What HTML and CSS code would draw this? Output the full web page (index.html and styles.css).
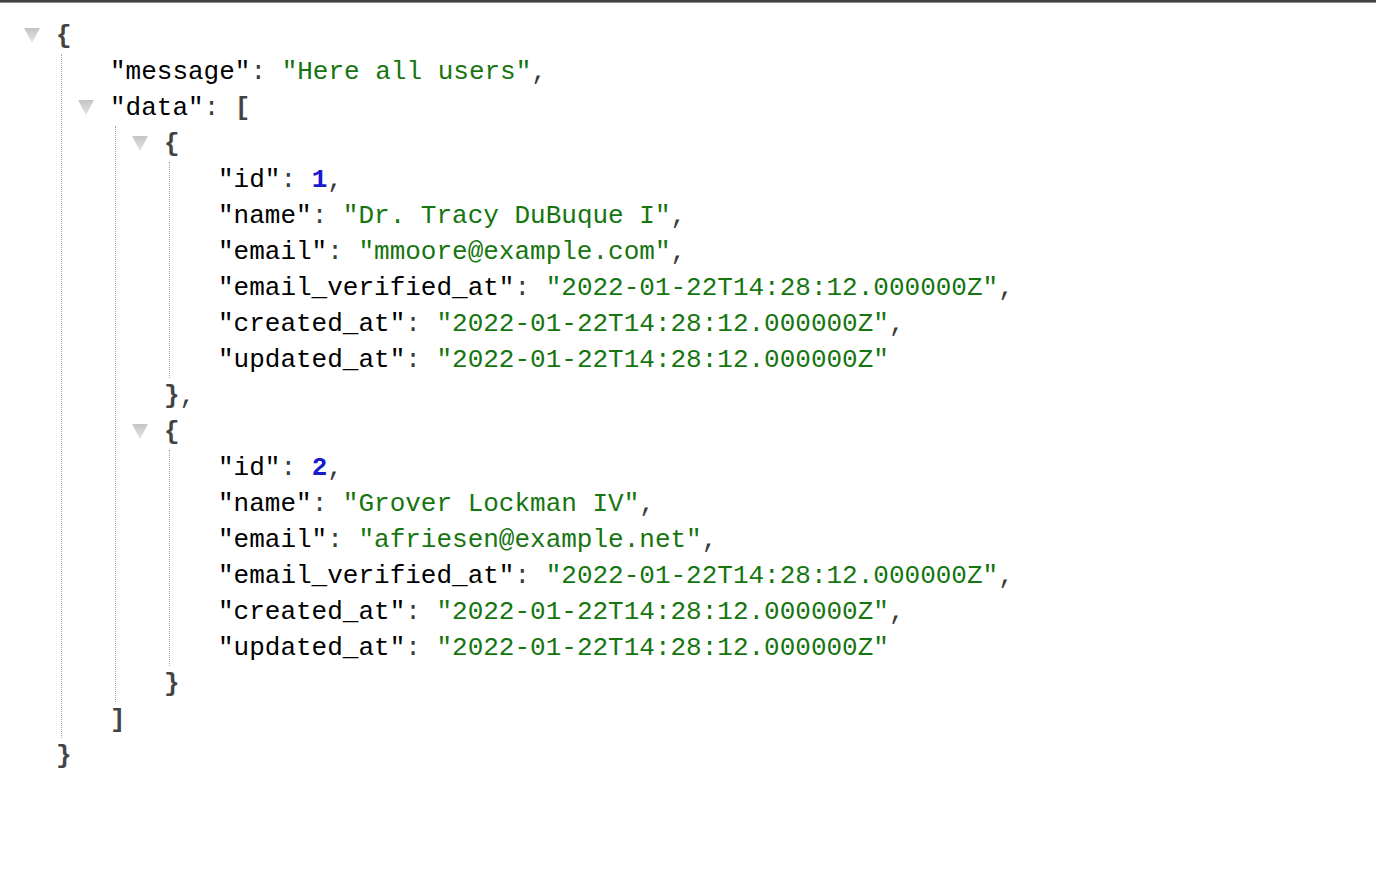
FILE: index.html
```html
<!DOCTYPE html>
<html>
<head>
<meta charset="utf-8">
<link rel="stylesheet" href="styles.css">
</head>
<body>
<div class="topbar"></div>
<div class="json">
  <div class="line"><span class="tog"></span><span class="b">{</span></div>
  <div class="inner">
    <div class="line"><span class="k">"message"</span><span class="p">: </span><span class="s">"Here all users"</span><span class="p">,</span></div>
    <div class="line"><span class="tog"></span><span class="k">"data"</span><span class="p">: </span><span class="b">[</span></div>
    <div class="inner">
      <div class="line"><span class="tog"></span><span class="b">{</span></div>
      <div class="inner">
        <div class="line"><span class="k">"id"</span><span class="p">: </span><span class="n">1</span><span class="p">,</span></div>
        <div class="line"><span class="k">"name"</span><span class="p">: </span><span class="s">"Dr. Tracy DuBuque I"</span><span class="p">,</span></div>
        <div class="line"><span class="k">"email"</span><span class="p">: </span><span class="s">"mmoore@example.com"</span><span class="p">,</span></div>
        <div class="line"><span class="k">"email_verified_at"</span><span class="p">: </span><span class="s">"2022-01-22T14:28:12.000000Z"</span><span class="p">,</span></div>
        <div class="line"><span class="k">"created_at"</span><span class="p">: </span><span class="s">"2022-01-22T14:28:12.000000Z"</span><span class="p">,</span></div>
        <div class="line"><span class="k">"updated_at"</span><span class="p">: </span><span class="s">"2022-01-22T14:28:12.000000Z"</span></div>
      </div>
      <div class="line"><span class="b">}</span><span class="p">,</span></div>
      <div class="line"><span class="tog"></span><span class="b">{</span></div>
      <div class="inner">
        <div class="line"><span class="k">"id"</span><span class="p">: </span><span class="n">2</span><span class="p">,</span></div>
        <div class="line"><span class="k">"name"</span><span class="p">: </span><span class="s">"Grover Lockman IV"</span><span class="p">,</span></div>
        <div class="line"><span class="k">"email"</span><span class="p">: </span><span class="s">"afriesen@example.net"</span><span class="p">,</span></div>
        <div class="line"><span class="k">"email_verified_at"</span><span class="p">: </span><span class="s">"2022-01-22T14:28:12.000000Z"</span><span class="p">,</span></div>
        <div class="line"><span class="k">"created_at"</span><span class="p">: </span><span class="s">"2022-01-22T14:28:12.000000Z"</span><span class="p">,</span></div>
        <div class="line"><span class="k">"updated_at"</span><span class="p">: </span><span class="s">"2022-01-22T14:28:12.000000Z"</span></div>
      </div>
      <div class="line"><span class="b">}</span></div>
    </div>
    <div class="line"><span class="b">]</span></div>
  </div>
  <div class="line"><span class="b">}</span></div>
</div>
</body>
</html>
```

FILE: styles.css
```css
html, body {
  margin: 0;
  padding: 0;
  background: #ffffff;
}

.topbar {
  height: 3px;
  background: #434343;
  border-bottom: 1px solid #8a8a8a;
  box-sizing: border-box;
}

.json {
  font-family: "Liberation Mono", "DejaVu Sans Mono", monospace;
  font-size: 26px;
  line-height: 36px;
  color: #000;
  padding: 15px 0 0 56px;
}

.line {
  position: relative;
  height: 36px;
  white-space: pre;
}

.inner {
  margin-left: 5px;
  border-left: 1px dotted #a6a6a6;
  padding-left: 48px;
}

.tog {
  position: absolute;
  left: -32px;
  top: 10px;
  width: 16px;
  height: 15px;
  background: linear-gradient(#c4c4c4, #e4e4e4);
  clip-path: polygon(0 0, 100% 0, 50% 100%);
}

.k { color: #000; }
.p { color: #3a3a3a; }
.b { color: #444; font-weight: bold; }
.s { color: #16750f; }
.n { color: #1a1acc; font-weight: bold; }
```
